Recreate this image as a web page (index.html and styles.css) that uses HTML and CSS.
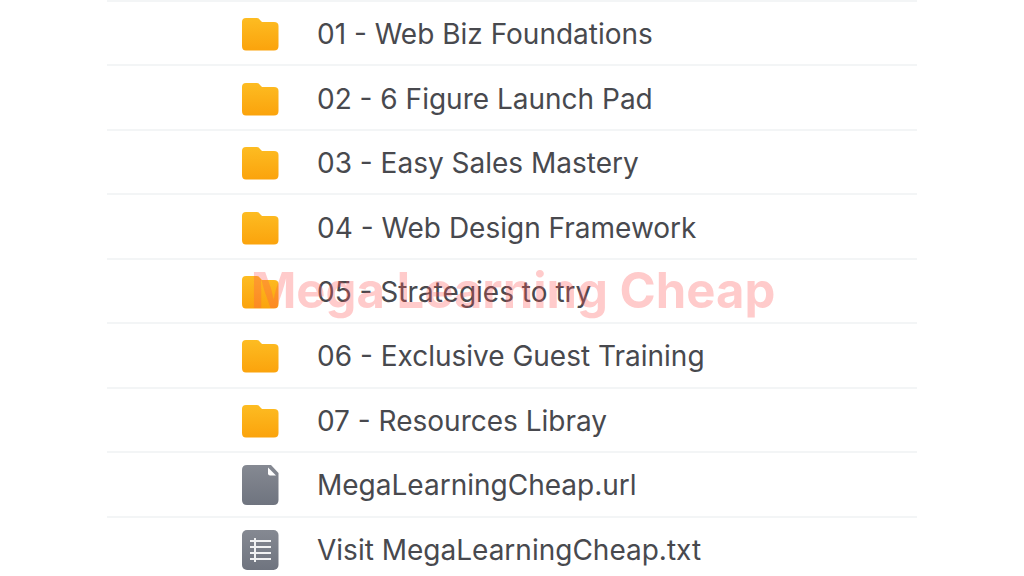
FILE: index.html
```html
<!DOCTYPE html>
<html lang="en">
<head>
<meta charset="utf-8">
<title>Files</title>
<link rel="stylesheet" href="styles.css">
</head>
<body>
<svg class="defs" aria-hidden="true">
  <defs>
    <linearGradient id="gold" x1="0" y1="0" x2="0" y2="1"><stop offset="0" stop-color="#fdbc22"/><stop offset="1" stop-color="#fba30c"/></linearGradient>
    <linearGradient id="slate" x1="0" y1="0" x2="0" y2="1"><stop offset="0" stop-color="#858992"/><stop offset="1" stop-color="#6f747f"/></linearGradient>
    <symbol id="folder" viewBox="0 0 38 42"><path fill="url(#gold)" d="M5 5H16Q18 5 19 7L21 9H33Q37.500 9 37.500 13V33Q37.500 37.500 33 37.500H5Q1 37.500 1 33V9Q1 5 5 5Z"/></symbol>
    <symbol id="file" viewBox="0 0 38 42"><path fill="url(#slate)" d="M6 1H30L37.500 9V36Q37.500 41 32.500 41H6Q1 41 1 36V6Q1 1 6 1Z"/><path fill="#fff" d="M27 3.500V9.500Q27 11.500 29 11.500H35Z"/></symbol>
    <symbol id="text" viewBox="0 0 38 42"><rect x="1" y="1" width="36.500" height="40" rx="5" fill="url(#slate)"/><path fill="none" stroke="#f1f2f3" stroke-width="2" d="M9 12H30M9 18H30M9 24H30M9 30H30M14 9V33"/></symbol>
  </defs>
</svg>
<main class="listing">
  <ul class="files">
    <li class="row"><svg class="icon"><use href="#folder"/></svg><span>01 - Web Biz Foundations</span></li>
    <li class="row"><svg class="icon"><use href="#folder"/></svg><span>02 - 6 Figure Launch Pad</span></li>
    <li class="row"><svg class="icon"><use href="#folder"/></svg><span>03 - Easy Sales Mastery</span></li>
    <li class="row"><svg class="icon"><use href="#folder"/></svg><span>04 - Web Design Framework</span></li>
    <li class="row"><svg class="icon"><use href="#folder"/></svg><span>05 - Strategies to try</span></li>
    <li class="row"><svg class="icon"><use href="#folder"/></svg><span>06 - Exclusive Guest Training</span></li>
    <li class="row"><svg class="icon"><use href="#folder"/></svg><span>07 - Resources Libray</span></li>
    <li class="row"><svg class="icon"><use href="#file"/></svg><span>MegaLearningCheap.url</span></li>
    <li class="row"><svg class="icon"><use href="#text"/></svg><span>Visit MegaLearningCheap.txt</span></li>
  </ul>
  <div class="watermark">Mega Learning Cheap</div>
</main>
</body>
</html>
```
FILE: styles.css
```css
body {
  margin: 0;
  background: #fff;
  color: #48494e;
  font-family: Inter, "Liberation Sans", sans-serif;
}
.defs {
  position: absolute;
  width: 0;
  height: 0;
}
.listing {
  position: relative;
  height: 100vh;
  overflow: hidden;
}
.files {
  display: grid;
  grid-template-rows: repeat(9, 1fr);
  height: calc(100vh + 4px);
  margin: 0 107px;
  padding: 0;
  list-style: none;
}
.row {
  display: flex;
  align-items: center;
  gap: 38px;
  padding: 2px 0 0 134px;
  border-top: 2px solid #f3f5f6;
  font-size: 28px;
  line-height: 36px;
}
.icon {
  width: 38px;
  height: 42px;
}
.watermark {
  position: absolute;
  inset: 0;
  display: flex;
  align-items: center;
  justify-content: center;
  padding: 4px 0 0 2px;
  color: rgba(255, 82, 82, 0.3);
  font-size: 49px;
  font-weight: 700;
  pointer-events: none;
}
```
